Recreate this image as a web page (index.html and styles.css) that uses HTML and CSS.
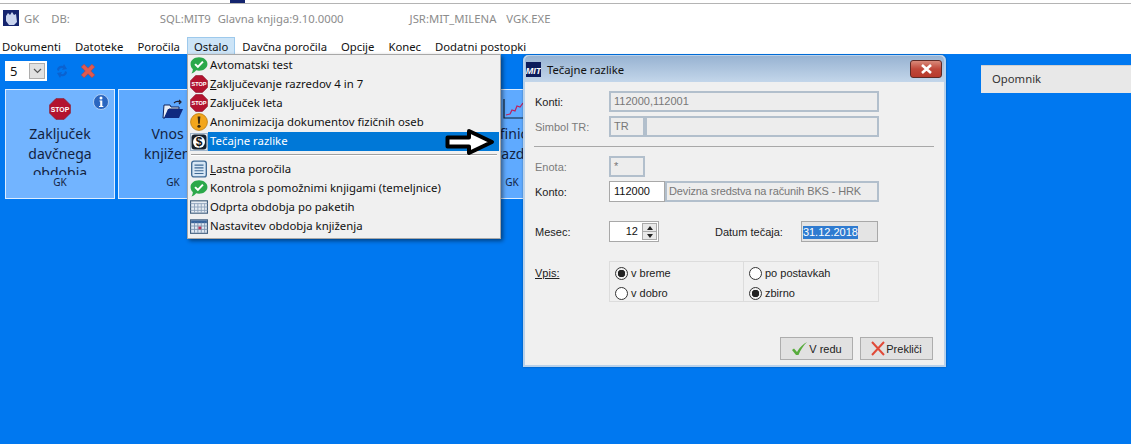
FILE: index.html
```html
<!DOCTYPE html>
<html lang="sl">
<head>
<meta charset="utf-8">
<title>GK</title>
<link rel="stylesheet" href="styles.css">
</head>
<body>
<svg class="defs" width="0" height="0" aria-hidden="true">
  <defs>
    <symbol id="i-stop" viewBox="0 0 16 16">
      <path d="M5 .5h6L15.500 5v6L11 15.500H5L.5 11V5z" fill="#b3132f" stroke="#8e1a30" stroke-width=".6"/>
      <text x="8" y="10.200" text-anchor="middle" class="stop-text">STOP</text>
    </symbol>
    <symbol id="i-ok" viewBox="0 0 16 16">
      <path d="M8 1c4.200 0 7.500 2.500 7.500 6S12.200 13 8 13c-.9 0-1.700-.1-2.500-.3C4.500 14 3 15.200 1.300 15.500c.8-1.100 1.200-2.300 1.200-3.900C1.300 10.500.5 8.900.5 7 .5 3.500 3.800 1 8 1z" fill="#2ba84a"/>
      <path d="M4.500 7.200l2.500 2.500 4.500-4.700" fill="none" stroke="#fff" stroke-width="1.800"/>
    </symbol>
    <symbol id="i-warn" viewBox="0 0 16 16">
      <circle cx="8" cy="8" r="7.500" fill="#f2a61d" stroke="#b97a10" stroke-width=".7"/>
      <path d="M6.800 3h2.400l-.5 6.500H7.300z" fill="#3a2a10"/>
      <circle cx="8" cy="11.800" r="1.400" fill="#3a2a10"/>
    </symbol>
    <symbol id="i-dollar" viewBox="0 0 18 18">
      <rect x=".5" y=".5" width="17" height="17" fill="#dfe8f2" stroke="#9fb4ca"/>
      <rect x="1.500" y="1.500" width="15" height="15" rx="3" fill="#15202c"/>
      <circle cx="9" cy="9" r="6" fill="#fff"/>
      <text x="9" y="13" text-anchor="middle" class="dollar-text">$</text>
    </symbol>
    <symbol id="i-list" viewBox="0 0 16 16">
      <rect x="1.500" y="1" width="13" height="14" rx="2" fill="#d6e6f5" stroke="#3f6a95" stroke-width="1.200"/>
      <path d="M4 4.500h8M4 7h8M4 9.500h8M4 12h8" stroke="#3f6a95"/>
    </symbol>
    <symbol id="i-grid" viewBox="0 0 16 16">
      <rect x=".5" y="2.500" width="15" height="11" fill="#e6ecf3" stroke="#44607e"/>
      <path d="M.5 5h15M4 5v8M7 5v8M10 5v8M13 5v8M.5 8h15M.5 11h15" stroke="#8ca2ba" stroke-width=".8"/>
    </symbol>
    <symbol id="i-cal" viewBox="0 0 16 16">
      <rect x=".5" y="2.500" width="15" height="12" fill="#dfe8f3" stroke="#44607e"/>
      <rect x="1" y="3" width="14" height="2.500" fill="#36639b"/>
      <path d="M4 5v9M7 5v9M10 5v9M13 5v9M.5 8h15M.5 11h15" stroke="#7c94b0" stroke-width=".8"/>
      <rect x="7.500" y="8.500" width="2.500" height="2.500" fill="#b9355a"/>
    </symbol>
    <symbol id="i-info" viewBox="0 0 16 16">
      <circle cx="8" cy="8" r="7.500" fill="#2a66c0" stroke="#d4e4f6" stroke-width=".7"/>
      <circle cx="8" cy="4" r="1.500" fill="#fff"/>
      <path d="M6.500 6.500h2.800v5.500h1v1H6v-1h1.200V7.500h-.7z" fill="#fff"/>
    </symbol>
    <symbol id="i-x" viewBox="0 0 16 16">
      <path d="M2 4.500L4.500 2 8 5.500 11.500 2 14 4.500 10.500 8 14 11.500 11.500 14 8 10.500 4.500 14 2 11.500 5.500 8z" fill="#e25a4f" stroke="#9e4a5a" stroke-width=".7"/>
    </symbol>
    <symbol id="i-logo" viewBox="0 0 15 15">
      <rect width="15" height="15" fill="#0c1c5c"/>
      <text x="7.500" y="11.500" text-anchor="middle" class="logo-text">MIT</text>
    </symbol>
  </defs>
</svg>

<div class="top-strip">
  <span class="strip-mark"></span>
</div>

<header class="titlebar">
  <svg class="app-icon" width="16" height="16" viewBox="0 0 16 16" aria-hidden="true">
    <rect width="16" height="16" fill="#14246e"/>
    <path d="M3 6l2-3 2 2 2-3 2 3 2-1 1 8-3 3H6L3 11z" fill="#c9d4ee"/>
  </svg>
  <span class="t-gk">GK</span>
  <span class="t-db">DB:</span>
  <span class="t-sql">SQL:MIT9</span>
  <span class="t-ver">Glavna knjiga:9.10.0000</span>
  <span class="t-jsr">JSR:MIT_MILENA</span>
  <span class="t-exe">VGK.EXE</span>
</header>

<nav class="menubar">
  <span class="menu-item">Dokumenti</span>
  <span class="menu-item">Datoteke</span>
  <span class="menu-item">Poročila</span>
  <span class="menu-item is-open">Ostalo</span>
  <span class="menu-item">Davčna poročila</span>
  <span class="menu-item">Opcije</span>
  <span class="menu-item">Konec</span>
  <span class="menu-item">Dodatni postopki</span>
</nav>

<main class="desktop">
  <div class="toolbar">
    <div class="combo">
      <span class="combo-value">5</span>
      <span class="combo-btn">
        <svg width="9" height="6" viewBox="0 0 9 6" aria-hidden="true"><path d="M1 1l3.500 3.500L8 1" fill="none" stroke="#555" stroke-width="1.200"/></svg>
      </span>
    </div>
    <svg class="tool-refresh" width="16" height="18" viewBox="0 0 16 18" aria-hidden="true">
      <path d="M3 8c0-3 3-5 6-4l1-2 3 5-5 1 1-2c-2-.5-4 .5-4 3z" fill="#0a62d0"/>
      <path d="M13 10c0 3-3 5-6 4l-1 2-3-5 5-1-1 2c2 .5 4-.5 4-3z" fill="#0a62d0"/>
    </svg>
    <svg class="tool-x" width="18" height="18" aria-hidden="true"><use href="#i-x"/></svg>
  </div>

  <div class="cards">
    <article class="card card-first">
      <svg class="card-info" width="16" height="16" aria-hidden="true"><use href="#i-info"/></svg>
      <div class="card-icon"><svg width="22" height="22" aria-hidden="true"><use href="#i-stop"/></svg></div>
      <div class="card-text">Zaključek davčnega obdobja</div>
      <div class="card-tag">GK</div>
    </article>
    <article class="card">
      <div class="card-icon">
        <svg width="22" height="22" viewBox="0 0 22 22" aria-hidden="true">
          <path d="M2 7h6l1 2h8v2H7l-4 9H1z" fill="#e8eef6" stroke="#10245c"/>
          <path d="M6 11h15l-4 9H2z" fill="#0f2a80"/>
          <path d="M12 5c2-2 4-2 6-1M17 2l2 2-2 2" fill="none" stroke="#223" stroke-width="1.200"/>
        </svg>
      </div>
      <div class="card-text">Vnos v knjiženje</div>
      <div class="card-tag">GK</div>
    </article>
    <article class="card"></article>
    <article class="card"></article>
    <article class="card">
      <div class="card-icon">
        <svg width="22" height="22" viewBox="0 0 22 22" aria-hidden="true">
          <path d="M3 1v19h19" fill="none" stroke="#123" stroke-width="1.200"/>
          <path d="M5 17l4-1 2-4 3 1 2-5 3 1 3-4" fill="none" stroke="#c0205a" stroke-width="1.200"/>
        </svg>
      </div>
      <div class="card-text">Definicija razd.</div>
      <div class="card-tag">GK</div>
    </article>
  </div>

  <aside class="reminder">Opomnik</aside>

  <div class="dropdown">
    <div class="dd-row"><svg class="dd-icon" aria-hidden="true"><use href="#i-ok"/></svg><span>Avtomatski test</span></div>
    <div class="dd-row"><svg class="dd-icon" aria-hidden="true"><use href="#i-stop"/></svg><span><u>Z</u>aključevanje razredov 4 in 7</span></div>
    <div class="dd-row"><svg class="dd-icon" aria-hidden="true"><use href="#i-stop"/></svg><span>Zaključek leta</span></div>
    <div class="dd-row"><svg class="dd-icon" aria-hidden="true"><use href="#i-warn"/></svg><span>Anonimizacija dokumentov fizičnih oseb</span></div>
    <div class="dd-row is-active"><svg class="dd-icon dd-icon-boxed" aria-hidden="true"><use href="#i-dollar"/></svg><span class="dd-label">Tečajne razlike</span></div>
    <div class="dd-sep"></div>
    <div class="dd-row"><svg class="dd-icon" aria-hidden="true"><use href="#i-list"/></svg><span><u>L</u>astna poročila</span></div>
    <div class="dd-row"><svg class="dd-icon" aria-hidden="true"><use href="#i-ok"/></svg><span>Kontrola s pomožnimi knjigami (temeljnice)</span></div>
    <div class="dd-row"><svg class="dd-icon" aria-hidden="true"><use href="#i-grid"/></svg><span>Odprta obdobja po paketih</span></div>
    <div class="dd-row"><svg class="dd-icon" aria-hidden="true"><use href="#i-cal"/></svg><span>Nastavitev obdobja knjiženja</span></div>
  </div>

  <svg class="pointer" width="52" height="28" viewBox="0 0 52 28" aria-hidden="true">
    <path d="M2.500 9.500H24V3L47 14 24 25v-6.500H2.500z" fill="#fff" stroke="#000" stroke-width="4" stroke-linejoin="round"/>
  </svg>

  <section class="dialog">
    <div class="dlg-title">
      <svg class="dlg-logo" width="15" height="15" aria-hidden="true"><use href="#i-logo"/></svg>
      <span class="dlg-caption">Tečajne razlike</span>
      <span class="dlg-close">
        <svg width="13" height="10" viewBox="0 0 13 10" aria-hidden="true"><path d="M2 1l9 8M11 1L2 9" stroke="#fff" stroke-width="2.600"/></svg>
      </span>
    </div>
    <div class="dlg-body">
      <div class="form-row row-konti">
        <label class="lbl">Konti:</label>
        <div class="field f-disabled f-full">112000,112001</div>
      </div>
      <div class="form-row row-simbol">
        <label class="lbl lbl-off">Simbol TR:</label>
        <div class="field f-disabled f-short">TR</div>
        <div class="field f-disabled f-grow"></div>
      </div>
      <hr class="rule">
      <div class="form-row row-enota">
        <label class="lbl lbl-off">Enota:</label>
        <div class="field f-disabled f-short">*</div>
      </div>
      <div class="form-row row-konto">
        <label class="lbl">Konto:</label>
        <div class="field f-white f-code">112000</div>
        <div class="field f-disabled f-grow f-desc">Devizna sredstva na računih BKS - HRK</div>
      </div>
      <div class="form-row row-mesec">
        <label class="lbl">Mesec:</label>
        <div class="field f-white f-spin">
          <span class="spin-val">12</span>
          <span class="spin-btns">
            <span class="spin-btn"><i class="tri-up"></i></span>
            <span class="spin-btn"><i class="tri-down"></i></span>
          </span>
        </div>
        <label class="lbl lbl-date">Datum tečaja:</label>
        <div class="field f-date"><span class="selected">31.12.2018</span></div>
      </div>
      <div class="form-row row-vpis">
        <label class="lbl lbl-vpis"><u>Vpis:</u></label>
        <div class="radio-groups">
          <div class="radio-col col-left">
            <div class="radio"><i class="dot is-on"></i>v breme</div>
            <div class="radio"><i class="dot"></i>v dobro</div>
          </div>
          <div class="radio-col col-right">
            <div class="radio"><i class="dot"></i>po postavkah</div>
            <div class="radio"><i class="dot is-on"></i>zbirno</div>
          </div>
        </div>
      </div>
      <div class="dlg-actions">
        <button class="btn" type="button">
          <svg width="17" height="15" viewBox="0 0 17 15" aria-hidden="true"><path d="M1 9l2-1.500 3 3.500C9 6 12 3 16 1c-3.500 3.500-6.500 8-8.500 13H5z" fill="#57ab3c"/></svg>V redu
        </button>
        <button class="btn" type="button">
          <svg width="14" height="15" viewBox="0 0 14 15" aria-hidden="true"><path d="M1 1l12 13M13 1L1 14" stroke="#e04a38" stroke-width="2"/></svg>Prekliči
        </button>
      </div>
    </div>
  </section>
</main>
</body>
</html>
```

FILE: styles.css
```css
* { box-sizing: border-box; }
html, body { margin: 0; height: 100%; }
body {
  display: flex;
  flex-direction: column;
  width: 1131px;
  height: 444px;
  overflow: hidden;
  background: #0078f0;
  font-family: "Noto Sans", "Open Sans", sans-serif;
  color: #111;
}
.defs { position: absolute; }
.stop-text { font: bold 5px "Liberation Sans", sans-serif; fill: #fff; }
.dollar-text { font: bold 12px "Liberation Sans", sans-serif; fill: #111; }
.logo-text { font: italic bold 9px "Liberation Sans", sans-serif; fill: #fff; }

.top-strip {
  height: 4px;
  flex: none;
  background: #fff;
  border-bottom: 1px solid #b4b4b4;
  padding-left: 230px;
}
.strip-mark { display: block; width: 15px; height: 3px; background: #14246e; }

.titlebar {
  flex: none;
  height: 25px;
  display: flex;
  align-items: center;
  background: #fff;
  color: #8c8c8c;
  font-size: 11.300px;
  padding: 3px 0 0 3px;
}
.app-icon { flex: none; }
.t-gk { margin-left: 5px; }
.t-db { margin-left: 12px; }
.t-sql { margin-left: 90px; }
.t-ver { margin-left: 7px; }
.t-jsr { margin-left: 66px; }
.t-exe { margin-left: 10px; }

.menubar {
  flex: none;
  height: 25px;
  display: flex;
  align-items: stretch;
  background: #fff;
  font-size: 11.300px;
  padding-top: 8px;
}
.menu-item {
  padding: 2px 6px 0;
  line-height: 14px;
  border: 1px solid transparent;
  border-bottom: 0;
}
.menu-item:first-child { padding-left: 1px; }
.menu-item.is-open { background: #cce4f7; border-color: #9dc9ec; }

.desktop { position: relative; flex: 1; min-height: 0; padding: 7px 0 0 5px; }

.toolbar { display: flex; align-items: center; height: 20px; }
.combo {
  width: 42px;
  height: 20px;
  background: #fff;
  display: flex;
  align-items: center;
  padding: 1px 2px 1px 1px;
  font-size: 13px;
}
.combo-value { flex: 1; padding-left: 4px; }
.combo-btn {
  width: 16px;
  height: 16px;
  background: #e1e1e1;
  border: 1px solid #adadad;
  display: flex;
  align-items: center;
  justify-content: center;
}
.tool-refresh { margin-left: 7px; }
.tool-x { margin-left: 9px; }

.cards { display: flex; gap: 3px; margin-top: 8px; }
.card {
  flex: none;
  position: relative;
  width: 110px;
  height: 110px;
  border: 1px solid #dcecff;
  background: #5faaff;
  color: #13233f;
  text-align: center;
}
.card-first { background: #72b4ff; }
.card-icon { height: 29px; padding-top: 8px; display: flex; justify-content: center; }
.card-info { position: absolute; top: 4px; right: 5px; }
.card-text {
  margin-top: 5px;
  padding: 0 14px;
  height: 51px;
  overflow: hidden;
  font: 14px/19.500px "Noto Sans", sans-serif;
}
.card-tag { font: 10px/14px "Noto Sans", sans-serif; }

.reminder {
  position: absolute;
  left: 981px;
  top: 11px;
  width: 150px;
  height: 28px;
  background: #e8e8e8;
  border-top: 1px solid #d0d0d0;
  padding-left: 11px;
  font-size: 11.300px;
  line-height: 26px;
  color: #333;
}

.dropdown {
  position: absolute;
  left: 187px;
  top: 0;
  width: 314px;
  height: 185px;
  background: #f0f0f0;
  border: 1px solid #a8a8a8;
  box-shadow: 2px 2px 4px rgba(0, 0, 0, .45);
  padding: 0 1px;
  font-size: 11.360px;
}
.dd-row { display: flex; align-items: center; height: 19px; }
.dd-icon { flex: none; width: 18px; height: 18px; margin: 0 2px 0 1px; }
.dd-row.is-active { margin-top: 1px; color: #fff; }
.dd-icon-boxed { margin-right: 0; }
.dd-label {
  flex: 1;
  height: 19px;
  line-height: 18px;
  padding-left: 2px;
  background: #0078d7;
}
.dd-sep { height: 8px; margin: 0 2px; background: linear-gradient(#f0f0f0 3px, #a0a0a0 3px, #a0a0a0 4px, #fff 4px, #fff 5px, #f0f0f0 5px); }

.pointer { position: absolute; left: 445px; top: 74px; }

.dialog {
  position: absolute;
  left: 523px;
  top: 1px;
  width: 423px;
  height: 312px;
  background: #f0f0f0;
  border: 1px solid #b9d1ea;
  border-width: 1px 2px 2px;
  border-radius: 5px 5px 0 0;
  box-shadow: 0 0 2px rgba(0, 0, 0, .4);
  font-family: "Liberation Sans", sans-serif;
  font-size: 11px;
}
.dlg-title {
  height: 26px;
  display: flex;
  align-items: center;
  padding: 0 2px 0 1px;
  background: linear-gradient(#98b3d2, #c3d6ea);
  border-radius: 4px 4px 0 0;
}
.dlg-logo { flex: none; }
.dlg-caption { flex: 1; margin-left: 6px; font: 11.300px "Noto Sans", sans-serif; color: #111; }
.dlg-close {
  width: 32px;
  height: 18px;
  background: linear-gradient(#d98a7a, #c0483a 50%, #b73a2c);
  border: 1px solid #5e2a26;
  border-radius: 3px;
  display: flex;
  align-items: center;
  justify-content: center;
}
.dlg-body { padding: 9px 0 0 9px; }
.form-row { display: flex; align-items: center; }
.lbl { width: 75px; flex: none; padding-left: 1px; color: #222; }
.lbl-off { color: #7b7b7b; }
.row-konti, .row-simbol, .row-enota, .row-konto { height: 21px; }
.row-simbol { margin-top: 4px; }
.rule { margin: 9px 10px 9px 0; border: 0; border-top: 1px solid #a8a8a8; }
.row-konto { margin-top: 4px; }
.row-mesec { height: 21px; margin-top: 19px; }
.row-vpis { height: 41px; margin-top: 19px; align-items: flex-start; }
.lbl-vpis { padding-top: 6px; color: #222; }
.field {
  height: 21px;
  line-height: 16px;
  padding-left: 3px;
  font-size: 11px;
  color: #777;
  white-space: nowrap;
}
.f-disabled { background: #ededed; border: 2px solid #b2bfcc; }
.f-full { width: 270px; }
.f-short { width: 36px; }
.f-grow { width: 234px; }
.f-white { background: #fff; border: 1px solid #a8a8a8; color: #111; line-height: 18px; padding-left: 4px; }
.f-code { width: 56px; }
.f-desc { width: 214px; line-height: 17px; padding-left: 2px; letter-spacing: -.13px; }
.f-spin { width: 50px; display: flex; padding: 0; }
.spin-val { flex: 1; text-align: right; padding-right: 3px; }
.spin-btns { width: 15px; display: flex; flex-direction: column; margin: 1px; border: 1px solid #aaa; background: #e8e8e8; }
.spin-btn { flex: 1; display: flex; align-items: center; justify-content: center; }
.spin-btn + .spin-btn { border-top: 1px solid #aaa; }
.tri-up { border: 3px solid transparent; border-top: 0; border-bottom: 4px solid #222; }
.tri-down { border: 3px solid transparent; border-bottom: 0; border-top: 4px solid #222; }
.lbl-date { width: auto; margin-left: 55px; padding-left: 1px; }
.f-date {
  width: 77px;
  margin-left: 18px;
  border: 1px solid #a8a8a8;
  background: #e4e4e4;
  padding: 2px 0 0 1px;
  color: #fff;
}
.selected { display: inline-block; background: #2f7bd0; line-height: 13px; }
.radio-groups { display: flex; width: 270px; height: 41px; border: 1px solid #dcdcdc; }
.radio-col { display: flex; flex-direction: column; gap: 7px; padding: 5px 0 0 5px; }
.col-left { width: 134px; border-right: 1px solid #dcdcdc; }
.col-right { flex: 1; }
.radio { display: flex; align-items: center; height: 13px; line-height: 13px; color: #222; }
.dot {
  width: 13px;
  height: 13px;
  border: 1px solid #333;
  border-radius: 50%;
  background: #fff;
  margin-right: 3px;
  flex: none;
}
.dot.is-on { background: radial-gradient(circle, #222 0 3.500px, #f0f0f0 4px); }
.dlg-actions { display: flex; gap: 7px; margin-top: 35px; padding-left: 246px; }
.btn {
  width: 73px;
  height: 23px;
  display: flex;
  align-items: center;
  justify-content: center;
  gap: 1px;
  padding: 0;
  background: #e1e1e1;
  border: 1px solid #adadad;
  font: 11px "Liberation Sans", sans-serif;
  color: #222;
}
```
